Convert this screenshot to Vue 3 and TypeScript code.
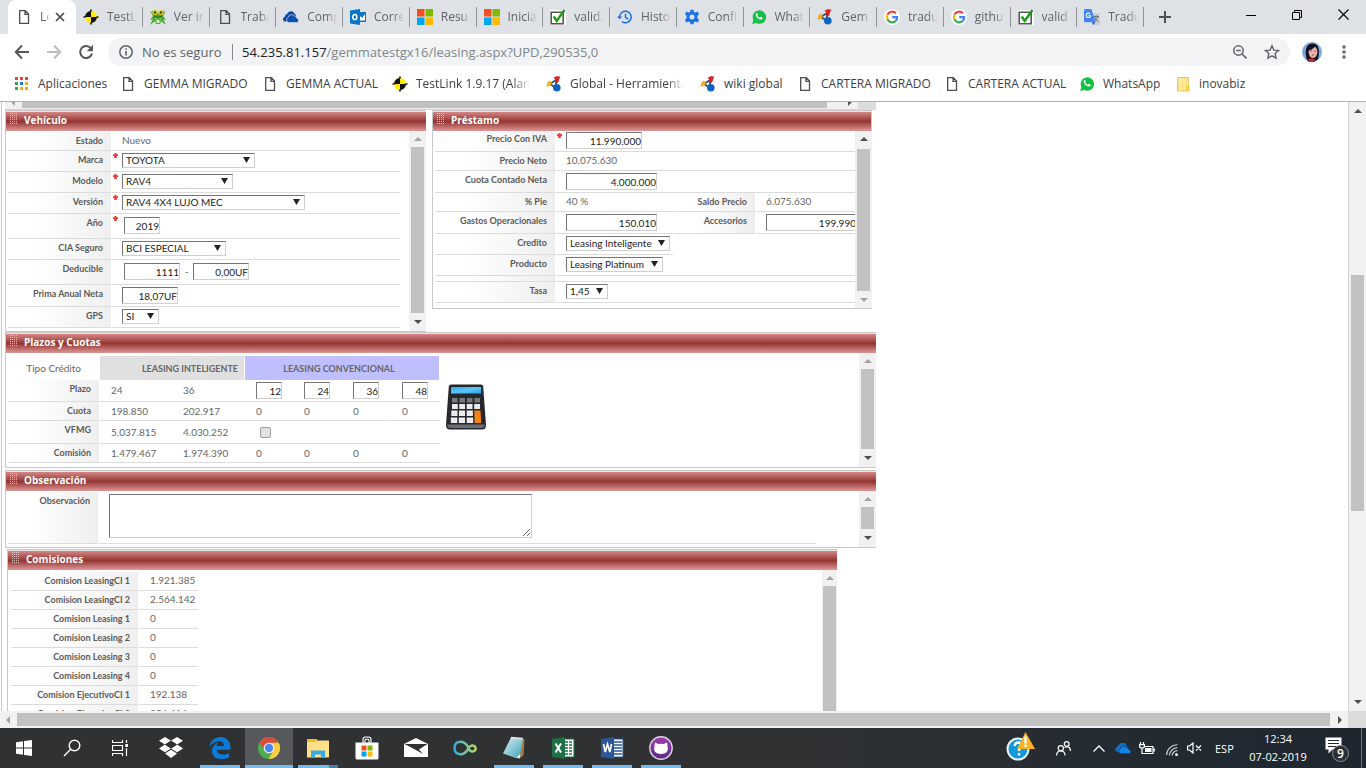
<script setup lang="ts">
import { ref } from 'vue'

interface Tab { icon: string; title: string }
interface Bookmark { icon: string; label: string; width: number }
interface Control { kind: 'text' | 'input' | 'select'; id: string; value: string; width?: number }
interface Field { label: string; required?: boolean; size: string; controls: Control[] }

const tabs: Tab[] = [
  { icon: 'testlink', title: 'TestLi' },
  { icon: 'frog', title: 'Ver in' },
  { icon: 'doc', title: 'Traba' },
  { icon: 'cloud', title: 'Comp' },
  { icon: 'outlook', title: 'Corre' },
  { icon: 'ms', title: 'Resu' },
  { icon: 'ms', title: 'Inicia' },
  { icon: 'check', title: 'valida' },
  { icon: 'history', title: 'Histo' },
  { icon: 'gear', title: 'Confi' },
  { icon: 'whatsapp', title: 'What' },
  { icon: 'global', title: 'Gem' },
  { icon: 'google', title: 'tradu' },
  { icon: 'google', title: 'githu' },
  { icon: 'check', title: 'valid' },
  { icon: 'translate', title: 'Tradu' },
]

const bookmarks: Bookmark[] = [
  { icon: 'apps', label: 'Aplicaciones', width: 66 },
  { icon: 'doc', label: 'GEMMA MIGRADO', width: 102 },
  { icon: 'doc', label: 'GEMMA ACTUAL', width: 90 },
  { icon: 'testlink', label: 'TestLink 1.9.17 (Alan T', width: 114 },
  { icon: 'global', label: 'Global - Herramientas', width: 114 },
  { icon: 'global', label: 'wiki global', width: 57 },
  { icon: 'doc', label: 'CARTERA MIGRADO', width: 107 },
  { icon: 'doc', label: 'CARTERA ACTUAL', width: 95 },
  { icon: 'whatsapp', label: 'WhatsApp', width: 56 },
  { icon: 'folder', label: 'inovabiz', width: 46 },
]

const vehiculo: Field[] = [
  { label: 'Estado', size: 'plain', controls: [{ kind: 'text', id: 'estado', value: 'Nuevo' }] },
  { label: 'Marca', required: true, size: 'pick', controls: [{ kind: 'select', id: 'marca', value: 'TOYOTA', width: 133 }] },
  { label: 'Modelo', required: true, size: 'pick', controls: [{ kind: 'select', id: 'modelo', value: 'RAV4', width: 111 }] },
  { label: 'Versión', required: true, size: 'pick', controls: [{ kind: 'select', id: 'version', value: 'RAV4 4X4 LUJO MEC', width: 183 }] },
  { label: 'Año', required: true, size: 'tall', controls: [{ kind: 'input', id: 'anio', value: '2019', width: 36 }] },
  { label: 'CIA Seguro', size: 'pick', controls: [{ kind: 'select', id: 'cia', value: 'BCI ESPECIAL', width: 104 }] },
  {
    label: 'Deducible', size: 'tall', controls: [
      { kind: 'input', id: 'deducible', value: '1111', width: 56 },
      { kind: 'text', id: 'guion', value: '-' },
      { kind: 'input', id: 'deducible-uf', value: '0,00UF', width: 56 },
    ],
  },
  { label: 'Prima Anual Neta', size: 'entry', controls: [{ kind: 'input', id: 'prima', value: '18,07UF', width: 56 }] },
  { label: 'GPS', size: 'pick', controls: [{ kind: 'select', id: 'gps', value: 'SI', width: 37 }] },
]

const plazos = ref<string[]>(['12', '24', '36', '48'])
const aplicaVfmg = ref(false)
const observacion = ref('')

const comisiones: [string, string][] = [
  ['Comision LeasingCI 1', '1.921.385'],
  ['Comision LeasingCI 2', '2.564.142'],
  ['Comision Leasing 1', '0'],
  ['Comision Leasing 2', '0'],
  ['Comision Leasing 3', '0'],
  ['Comision Leasing 4', '0'],
  ['Comision EjecutivoCI 1', '192.138'],
  ['Comision EjecutivoCI 2', '256.414'],
]

const apps = [
  { name: 'Dropbox', icon: 'dropbox', state: '' },
  { name: 'Edge', icon: 'edge', state: 'open' },
  { name: 'Chrome', icon: 'chrome', state: 'active' },
  { name: 'Explorador', icon: 'explorer', state: 'open multi' },
  { name: 'Tienda', icon: 'store', state: '' },
  { name: 'Correo', icon: 'mail', state: '' },
  { name: 'Infinito', icon: 'infinity', state: '' },
  { name: 'Bloc de notas', icon: 'notepad', state: 'open' },
  { name: 'Excel', icon: 'excel', state: 'open' },
  { name: 'Word', icon: 'word', state: 'open' },
  { name: 'GitHub', icon: 'github', state: 'open' },
]
</script>

<template>
  <div class="screen">
    <svg class="defs" aria-hidden="true">
      <linearGradient id="g-inf" x1="0" x2="1"><stop offset="0" stop-color="#36b0d8" /><stop offset="1" stop-color="#b5d86a" /></linearGradient>
      <linearGradient id="g-note" x1="0" y1="0" x2="1" y2="1"><stop offset="0" stop-color="#d8f2f6" /><stop offset="1" stop-color="#3f9fb5" /></linearGradient>
      <linearGradient id="g-git" x1="0" y1="0" x2="0" y2="1"><stop offset="0" stop-color="#a63db0" /><stop offset="1" stop-color="#562a86" /></linearGradient>
      <linearGradient id="g-lcd" x1="0" y1="0" x2="1" y2="1"><stop offset="0" stop-color="#2aa5ee" /><stop offset=".5" stop-color="#5cc6fb" /><stop offset="1" stop-color="#2a9fe8" /></linearGradient>
      <symbol id="i-doc" viewBox="0 0 16 16"><path d="M3.700 1.700h5.600l3.200 3.200v9.400H3.700zM9 2v3.300h3.400" fill="none" stroke="#4a4d51" stroke-width="1.300" /></symbol>
      <symbol id="i-testlink" viewBox="0 0 16 16"><circle cx="8" cy="8" r="6" fill="#ffec00" /><path d="M8 8V2a6 6 0 0 0-6 6zM8 8v6a6 6 0 0 0 6-6z" fill="#111" /><path d="M7.200.5h1.600v2H7.200zM7.200 13.500h1.600v2H7.200zM.5 7.200h2v1.600h-2zM13.500 7.200h2v1.600h-2z" fill="#111" /></symbol>
      <symbol id="i-frog" viewBox="0 0 16 16"><path d="M0 2l3 2-1-3 4 3h4l4-3-1 3 3-2-3 5 3 4-3-1 3 6-5-4-1 3H6l-1-3-5 4 3-6-3 1 3-4z" fill="#46a22e" /><path d="M5 8h6l1 4-4 3-4-3z" fill="#5fbb3d" /><circle cx="5" cy="3.500" r="2.600" fill="#e8cc22" /><circle cx="11" cy="3.500" r="2.600" fill="#e8cc22" /><circle cx="5" cy="3.500" r="1.200" fill="#234f16" /><circle cx="11" cy="3.500" r="1.200" fill="#234f16" /><path d="M4 7q4 3 8 0" fill="none" stroke="#1f6115" /><path d="M6.500 11h3v3h-3z" fill="#d5efc6" /></symbol>
      <symbol id="i-cloud" viewBox="0 0 16 16"><path d="M2.500 12.800a2.600 2.600 0 0 1-.6-5.100 3 3 0 0 1 2.300-3 4 4 0 0 1 7.300-.2A3.400 3.400 0 0 1 13 8z" fill="#0b48a8" /><path d="M5.600 13.600a2.700 2.700 0 0 1-.5-5.100 3.300 3.300 0 0 1 5.800-1.700 2.900 2.900 0 0 1 3 2.500 2.300 2.300 0 0 1 .4 4.300z" fill="#0b4fb3" stroke="#dee1e6" stroke-width=".7" /></symbol>
      <symbol id="i-outlook" viewBox="0 0 16 16"><path d="M8 3h8v10H8z" fill="#0a74c8" /><path d="M9 6.500l3.300 2.200L15 5v6.500H9z" fill="#fff" /><path d="M0 1.400L10 0v16L0 14.600z" fill="#0a74c8" /><ellipse cx="4.800" cy="8" rx="2" ry="2.600" fill="none" stroke="#fff" stroke-width="1.500" /></symbol>
      <symbol id="i-ms" viewBox="0 0 16 16"><path d="M0 0h7.500v7.500H0z" fill="#f25022" /><path d="M8.500 0H16v7.500H8.500z" fill="#7fba00" /><path d="M0 8.500h7.500V16H0z" fill="#00a4ef" /><path d="M8.500 8.500H16V16H8.500z" fill="#ffb900" /></symbol>
      <symbol id="i-check" viewBox="0 0 16 16"><path d="M0 1h16v15H0z" fill="#fff" /><path d="M1.200 3.200h12v11.600h-12z" fill="none" stroke="#555" stroke-width="1.600" /><path d="M3.700 7.500l3 4.500L14.500 1" fill="none" stroke="#1a9a12" stroke-width="2.400" /></symbol>
      <symbol id="i-history" viewBox="0 0 16 16"><path d="M2.600 8A5.800 5.800 0 1 1 5 12.700M8.500 4.800v3.700l2.700 1.600" fill="none" stroke="#1a73e8" stroke-width="1.500" /><path d="M0 7.500h5.200L2.600 10.300z" fill="#1a73e8" /></symbol>
      <symbol id="i-gear" viewBox="0 0 16 16"><path d="M8 4a4 4 0 1 0 0 8 4 4 0 0 0 0-8z" fill="none" stroke="#1a73e8" stroke-width="3" /><path d="M6.500.8h3l.5 3H6zM6 12.200h4l-.5 3h-3zM.9 5.200l1.500-2.600 2.900 1.200-2 3.400zM12.700 8.800l2.400 2-1.500 2.600-2.900-1.200zM15.100 5.200l-1.500-2.600-2.900 1.200 2 3.400zM3.300 8.800l-2.400 2 1.500 2.600 2.900-1.200z" fill="#1a73e8" /></symbol>
      <symbol id="i-whatsapp" viewBox="0 0 16 16"><path d="M1.200 15l1.200-3.900A6.700 6.700 0 1 1 5.100 13.900z" fill="#10c143" /><path d="M4.900 4.500c.8-1 1.500-.5 2 1.200-.8.900-.6 1 .2 1.900s1.400 1.300 1.700 1.200l1-1.100 1.900 1c.2 1.400-1.400 2.200-2.800 1.800C6.300 9.700 4.100 6.900 4.900 4.500z" fill="#fff" /></symbol>
      <symbol id="i-global" viewBox="0 0 16 16"><path d="M10 4L4 8l6 4z" fill="none" stroke="#38516f" stroke-width="1.800" /><path d="M7.500 1.800C9.500.2 12.500-.6 14.500 1c-1.500 1-1.600 3.500-2.500 6-2.500-.4-3.300-2-2.700-3.800z" fill="#e02020" /><path d="M.5 11C.8 7.500 1.800 5 4 4.600c2.300 1.600 2 4-.3 5.200z" fill="#f5b11c" /><circle cx="10.800" cy="11.800" r="3.800" fill="#0a63c0" /></symbol>
      <symbol id="i-google" viewBox="0 0 16 16"><circle cx="8" cy="8" r="8" fill="#fff" /><path d="M12 4.300A5.300 5.300 0 0 0 3.500 5.500" fill="none" stroke="#ea4335" stroke-width="2.200" /><path d="M3.500 5.500a5.200 5.200 0 0 0 0 5" fill="none" stroke="#fbbc05" stroke-width="2.200" /><path d="M3.500 10.500a5.200 5.200 0 0 0 8.200 1.500" fill="none" stroke="#34a853" stroke-width="2.200" /><path d="M11.700 12a5 5 0 0 0 1.400-3.800H8.200" fill="none" stroke="#4285f4" stroke-width="2.200" /></symbol>
      <symbol id="i-translate" viewBox="0 0 16 16"><path d="M7 4h9v12H9z" fill="#ccd0d5" /><path d="M9.500 7.500h5.500M12.200 6v1.500M10.300 8l4 5M14.200 8l-4 5" stroke="#68727d" fill="none" /><path d="M1.200 0h6.300l4 13.200H1.200A1.200 1.200 0 0 1 0 12V1.200A1.200 1.200 0 0 1 1.200 0z" fill="#4285f4" /><path d="M8 13.200h3.500L9 16z" fill="#2554c7" /><path d="M6 4.800a2.200 2.200 0 1 0 .6 2H4.500" fill="none" stroke="#fff" stroke-width="1.100" /></symbol>
      <symbol id="i-apps" viewBox="0 0 16 16"><path d="M1 1h3v3H1zM6 1h3v3H6zM11 1h3v3h-3z" fill="#ea4335" /><path d="M1 6h3v3H1zM1 11h3v3H1z" fill="#34a853" /><path d="M6 6h3v3H6z" fill="#1a73e8" /><path d="M11 6h3v3h-3zM11 11h3v3h-3zM6 11h3v3H6z" fill="#f9ab00" /></symbol>
      <symbol id="i-folder" viewBox="0 0 16 16"><path d="M2.500 1.500h10.800v10.500l1 3H2.500z" fill="#ffe694" stroke="#e8c55c" /><path d="M11.700 14.500v-4h1.800v4" fill="#ffe694" stroke="#e8c02c" /></symbol>
      <symbol id="i-up" viewBox="0 0 8 4"><path d="M4 0l4 4H0z" fill="currentColor" /></symbol>
      <symbol id="i-down" viewBox="0 0 8 4"><path d="M4 4l4-4H0z" fill="currentColor" /></symbol>
      <symbol id="i-left" viewBox="0 0 4 8"><path d="M0 4l4-4v8z" fill="currentColor" /></symbol>
      <symbol id="i-right" viewBox="0 0 4 8"><path d="M4 4L0 0v8z" fill="currentColor" /></symbol>
      <symbol id="i-star" viewBox="0 0 5 6"><path d="M1.500 0h2v1.200H5v1.900H3.800V5H1.200V3.100H0V1.200h1.500z" fill="#f23a34" /></symbol>

      <symbol id="a-dropbox" viewBox="0 0 24 24"><path d="M6 1l6 3.800-6 3.800L0 4.800zM18 1l6 3.800-6 3.800-6-3.800zM6 8.600l6 3.800-6 3.800-6-3.800zM18 8.600l6 3.800-6 3.800-6-3.800zM12 13.800l6 3.800-6 4.400-6-4.400z" fill="#fff" /><path d="M12 4.800l6 3.800-6 3.800-6-3.800z" fill="#2f3133" /></symbol>
      <symbol id="a-edge" viewBox="0 0 24 24"><path d="M1.500 10.800C2.500 4.500 7 1 12.500 1c6.500 0 10 5 10 10.500v2.200H8.800c.3 5.400 7.800 5.900 12.200 3.200v4.600C13.500 25 4 23 4 15c0-4.500 2.800-7 6-8.500-1 1.200-1.300 2.300-1.400 3.500h7.500c.1-6.500-9.700-6.400-14.600.8z" fill="#0c7ad8" /></symbol>
      <symbol id="a-chrome" viewBox="0 0 24 24"><circle cx="12" cy="12" r="11" fill="#4caf50" /><path d="M2.400 6.600A11 11 0 0 1 21.600 6.700L12 7 7.300 14z" fill="#dd4b3e" /><path d="M21.700 6.700A11 11 0 0 1 11.500 23l5-8.500L13 6.700z" fill="#ffcd41" /><circle cx="12" cy="12" r="5.300" fill="#f4f4f4" /><circle cx="12" cy="12" r="4.200" fill="#4a86f0" /></symbol>
      <symbol id="a-explorer" viewBox="0 0 24 24"><path d="M1 3h10v3H1z" fill="#e8b222" /><path d="M1 4.500h22v17H1z" fill="#ffe08a" /><path d="M1 3h9v3H1z" fill="#f4bd24" /><path d="M5 22v-7.500h14V22h-4v-3.500H9V22z" fill="#35aae6" /></symbol>
      <symbol id="a-store" viewBox="0 0 24 24"><path d="M8 7V3.500Q8 1 10.500 1h3Q16 1 16 3.500V7M10 7V4q0-1 2-1t2 1v3" fill="none" stroke="#fff" stroke-width="1.100" /><path d="M.5 6.500h23V22q0 1.500-1.500 1.500H2Q.5 23.500.5 22z" fill="#fff" /><path d="M6.500 9.500h5v5h-5z" fill="#f25022" /><path d="M12.500 9.500h5v5h-5z" fill="#7fba00" /><path d="M6.500 15.500h5v5h-5z" fill="#00a4ef" /><path d="M12.500 15.500h5v5h-5z" fill="#ffb900" /></symbol>
      <symbol id="a-mail" viewBox="0 0 24 24"><path d="M0 8l12-6 12 6v13H0z" fill="#fff" /><path d="M.5 8h23l-8.500 5.500L19 18l-8-4.500z" fill="#2f3133" /></symbol>
      <symbol id="a-infinity" viewBox="0 0 24 24"><path d="M14.500 10C10 3.500 1.500 5 1.500 12s8.500 8.500 13 2l1.300-2.300c2.500-4 6.900-2 6.900.8s-4.400 4.500-6.600 1L14.500 10" fill="none" stroke="url(#g-inf)" stroke-width="2.400" /></symbol>
      <symbol id="a-notepad" viewBox="0 0 24 24"><path d="M20 2.500l2.500 1-1 16-4 3z" fill="#a97a3b" /><path d="M9 1.500l12 1-3.500 20L1 17.500z" fill="url(#g-note)" /><path d="M9 .8l12 1-.3 1.700-12-1z" fill="#dfe6e8" /><path d="M1 17.500L17.500 22.500l1-4.500L14 22z" fill="#eef7f8" /></symbol>
      <symbol id="a-excel" viewBox="0 0 24 24"><path d="M11 3h12v18H11z" fill="#fff" stroke="#1e7145" /><path d="M13 6h4M18 6h3M13 9h4M18 9h3M13 12h4M18 12h3M13 15h4M18 15h3M13 18h4M18 18h3" stroke="#1e7145" stroke-width="1.600" /><path d="M1 3l13-2v22L1 21z" fill="#1e7145" /><path d="M4.500 7.500l5.500 9M10 7.500l-5.500 9" stroke="#fff" stroke-width="2" /></symbol>
      <symbol id="a-word" viewBox="0 0 24 24"><path d="M11 3h12v18H11z" fill="#fff" stroke="#2b579a" /><path d="M13 6h9M13 9h9M13 12h9M13 15h9M13 18h9" stroke="#2b579a" stroke-width="1.500" /><path d="M1 3l13-2v22L1 21z" fill="#2b579a" /><path d="M3.500 8l1.700 8 2.300-8 2.300 8 1.700-8" fill="none" stroke="#fff" stroke-width="1.700" /></symbol>
      <symbol id="a-github" viewBox="0 0 24 24"><circle cx="12" cy="12" r="11.200" fill="url(#g-git)" stroke="#ddd0e2" stroke-width="1.400" /><path d="M6 6.500l3.300 1.600q2.700-.5 5.400 0L18 6.500q.8 2 .4 3.600c1.800 5-1.400 8-6.400 8s-8.200-3-6.400-8Q5.200 8.500 6 6.500z" fill="#fff" /></symbol>
    </svg>

    <header class="browser">
      <div class="tabstrip">
        <div class="tab current">
          <svg class="fav"><use href="#i-doc" /></svg>
          <span class="tab-title">Le</span>
          <button class="icon-btn" aria-label="Cerrar pestaña"><svg width="10" height="10" viewBox="0 0 10 10"><path d="M1 1l8 8M9 1L1 9" stroke="#45484c" stroke-width="1.700" /></svg></button>
        </div>
        <div class="tabs">
          <div v-for="(t, i) in tabs" :key="i" class="tab">
            <svg class="fav"><use :href="'#i-' + t.icon" /></svg>
            <span class="tab-title">{{ t.title }}</span>
          </div>
        </div>
        <div class="window-actions">
          <button class="icon-btn" aria-label="Nueva pestaña"><svg width="14" height="14" viewBox="0 0 14 14"><path d="M7 1v12M1 7h12" stroke="#4d5054" stroke-width="2" /></svg></button>
          <button class="icon-btn win first" aria-label="Minimizar"><svg width="10" height="10" viewBox="0 0 10 10"><path d="M0 5.500h10" stroke="#000" /></svg></button>
          <button class="icon-btn win" aria-label="Restaurar"><svg width="10" height="10" viewBox="0 0 10 10"><path d="M.5 2.500h7v7h-7zM2.500 2V.5h7v7H8" fill="none" stroke="#000" /></svg></button>
          <button class="icon-btn win" aria-label="Cerrar"><svg width="11" height="11" viewBox="0 0 11 11"><path d="M.5.500l10 10M10.500.500l-10 10" stroke="#000" stroke-width="1.100" /></svg></button>
        </div>
      </div>

      <div class="toolbar">
        <button class="icon-btn nav" aria-label="Atrás"><svg width="16" height="16" viewBox="0 0 16 16"><path d="M15 8H2M8 1.500L1.800 8 8 14.500" fill="none" stroke="#55585c" stroke-width="2" /></svg></button>
        <button class="icon-btn nav" aria-label="Adelante"><svg width="16" height="16" viewBox="0 0 16 16"><path d="M1 8h13M8 1.500L14.200 8 8 14.500" fill="none" stroke="#babcbe" stroke-width="2" /></svg></button>
        <button class="icon-btn nav" aria-label="Recargar"><svg width="16" height="16" viewBox="0 0 16 16"><path d="M13.200 4.700A6 6 0 1 0 14 9.500" fill="none" stroke="#55585c" stroke-width="2" /><path d="M15 .8v6.400H8.700z" fill="#55585c" /></svg></button>
        <div class="omnibox">
          <svg width="14" height="14" viewBox="0 0 14 14"><circle cx="7" cy="7" r="6.200" fill="none" stroke="#5f6368" stroke-width="1.500" /><path d="M7 6v4.500M7 3.300v1.500" stroke="#5f6368" stroke-width="1.600" /></svg>
          <span class="insecure">No es seguro</span>
          <span class="url"><b>54.235.81.157</b>/gemmatestgx16/leasing.aspx?UPD,290535,0</span>
          <button class="icon-btn" aria-label="Zoom"><svg width="14" height="14" viewBox="0 0 14 14"><circle cx="5.500" cy="5.500" r="4.700" fill="none" stroke="#5f6368" stroke-width="1.500" /><path d="M3.200 5.500h4.600M9 9l4.500 4.500" stroke="#5f6368" stroke-width="1.600" /></svg></button>
          <button class="icon-btn fav-star" aria-label="Favorito"><svg width="16" height="16" viewBox="0 0 16 16"><path d="M8 1.800l1.900 4.300 4.700.4-3.500 3.100 1 4.600L8 11.800l-4.100 2.400 1-4.600L1.400 6.500l4.700-.4z" fill="none" stroke="#5f6368" stroke-width="1.400" /></svg></button>
        </div>
        <svg class="avatar" viewBox="0 0 20 20"><circle cx="10" cy="10" r="10" fill="#7aa9dc" /><path d="M5 18C2 9 4 1.500 10.500 1.500S18 8 16 17l-4 3H7z" fill="#14101f" /><ellipse cx="11" cy="10" rx="4.400" ry="6" fill="#e8b3ab" /><path d="M5.500 9q5-1 8-5L7 3z" fill="#14101f" /><path d="M6 17l4-1 4 2-3 2H7z" fill="#b3302a" /><path d="M8.500 9h1.500M12 9h1.500M10 13h2" stroke="#7c3b3b" stroke-width=".8" /></svg>
        <button class="icon-btn menu" aria-label="Menú"><svg width="4" height="14" viewBox="0 0 4 14"><path d="M.5.500h3v3h-3zM.5 5.500h3v3h-3zM.5 10.500h3v3h-3z" fill="#5f6368" /></svg></button>
      </div>

      <nav class="bookmarks">
        <a v-for="(b, i) in bookmarks" :key="i" href="#" class="bookmark">
          <svg class="fav"><use :href="'#i-' + b.icon" /></svg>
          <span :class="{ faded: b.width === 114 }" :style="{ width: b.width + 'px' }">{{ b.label }}</span>
        </a>
      </nav>
    </header>

    <main class="viewport">
      <div class="page">
        <div class="form">
          <div class="upper-scroll">
            <svg class="ha dim" width="4" height="8"><use href="#i-left" /></svg>
            <i class="upper-thumb"></i>
            <svg class="ha" width="4" height="8"><use href="#i-right" /></svg>
            <i class="corner"></i>
          </div>

          <div class="pair">
            <section class="panel vehiculo">
              <h2>Vehículo</h2>
              <div class="body">
                <div class="fields">
                  <div v-for="f in vehiculo" :key="f.label" class="row" :class="f.size">
                    <label :for="f.controls[0].id">{{ f.label }}</label>
                    <div class="value">
                      <svg v-if="f.required" class="req"><use href="#i-star" /></svg>
                      <template v-for="c in f.controls" :key="c.id">
                        <span v-if="c.kind === 'text'" :id="c.id" class="plain-text">{{ c.value }}</span>
                        <input v-else-if="c.kind === 'input'" :id="c.id" type="text" :value="c.value" :style="{ width: c.width + 'px' }">
                        <span v-else class="pick-box" :style="{ width: c.width + 'px' }"><select :id="c.id"><option>{{ c.value }}</option></select></span>
                      </template>
                    </div>
                  </div>
                </div>
                <div class="scroll">
                  <svg class="dim"><use href="#i-up" /></svg><i class="thumb"></i><svg><use href="#i-down" /></svg>
                </div>
              </div>
            </section>

            <section class="panel prestamo">
              <h2>Préstamo</h2>
              <div class="body">
                <div class="fields">
                  <div class="row tight">
                    <label for="iva">Precio Con IVA</label>
                    <div class="value"><svg class="req"><use href="#i-star" /></svg><input id="iva" class="w76" type="text" value="11.990.000"></div>
                  </div>
                  <div class="row plain"><label>Precio Neto</label><div class="value">10.075.630</div></div>
                  <div class="row entry"><label for="contado">Cuota Contado Neta</label><div class="value"><input id="contado" class="w91" type="text" value="4.000.000"></div></div>
                  <div class="row plain four"><label>% Pie</label><div class="value">40 %</div><label>Saldo Precio</label><div class="value">6.075.630</div></div>
                  <div class="row entry four">
                    <label for="gastos">Gastos Operacionales</label><div class="value"><input id="gastos" class="w91" type="text" value="150.010"></div>
                    <label for="accesorios">Accesorios</label><div class="value"><input id="accesorios" class="w91" type="text" value="199.990"></div>
                  </div>
                  <div class="row pick four"><label for="credito">Credito</label><div class="value"><span class="pick-box w104"><select id="credito"><option>Leasing Inteligente</option></select></span></div></div>
                  <div class="row pick"><label for="producto">Producto</label><div class="value"><span class="pick-box w97"><select id="producto"><option>Leasing Platinum</option></select></span></div></div>
                  <div class="row thin"><span class="blank"></span><div class="value"></div></div>
                  <div class="row pick"><label for="tasa">Tasa</label><div class="value"><span class="pick-box w42"><select id="tasa"><option>1,45</option></select></span></div></div>
                </div>
                <div class="scroll lower">
                  <svg><use href="#i-up" /></svg><i class="thumb"></i><svg class="dim"><use href="#i-down" /></svg>
                </div>
              </div>
            </section>
          </div>

          <section class="panel plazos">
            <h2>Plazos y Cuotas</h2>
            <div class="body">
              <div class="fields">
                <table class="terms">
                  <colgroup><col class="c91"><col class="c72"><col class="c73"><col class="c48"><col class="c49"><col class="c49"><col class="c49"></colgroup>
                  <thead>
                    <tr><th class="kind">Tipo Crédito</th><th colspan="2" class="smart">LEASING INTELIGENTE</th><th colspan="4" class="conv">LEASING CONVENCIONAL</th></tr>
                  </thead>
                  <tbody>
                    <tr class="t22"><th>Plazo</th><td>24</td><td>36</td><td v-for="(p, i) in plazos" :key="i"><input v-model="plazos[i]" class="w26" type="text" :aria-label="'Plazo ' + p"></td></tr>
                    <tr class="t19"><th>Cuota</th><td>198.850</td><td>202.917</td><td>0</td><td>0</td><td>0</td><td>0</td></tr>
                    <tr class="t23"><th>VFMG</th><td>5.037.815</td><td>4.030.252</td><td colspan="4"><input v-model="aplicaVfmg" type="checkbox" aria-label="Aplica VFMG"></td></tr>
                    <tr class="t19"><th>Comisión</th><td>1.479.467</td><td>1.974.390</td><td>0</td><td>0</td><td>0</td><td>0</td></tr>
                  </tbody>
                </table>
                <button class="calc" aria-label="Calcular">
                  <svg width="40" height="46" viewBox="0 0 40 46">
                    <path d="M5 .5h30q2 0 2.200 2L40 41q0 4.500-4 4.500H4q-4 0-4-4.500L2.800 2.500Q3 .5 5 .5z" fill="#25282c" />
                    <path d="M1 40.500l.5 1.500q1 2 3 2h31q2 0 3-2l.5-1.500z" fill="#6b6e72" />
                    <path d="M5 3h30v6.500H5z" fill="url(#g-lcd)" />
                    <path d="M6 14h5.500v4.500H6zM13.500 14H19v4.500h-5.500zM21 14h5.500v4.500H21zM28.500 14H34v4.500h-5.500z" fill="#77797c" />
                    <path d="M6 20h5.800v5H6zM13.300 20H19v5h-5.700zM20.700 20h5.800v5h-5.800zM28.200 20H34v5h-5.800zM5.300 26.500H11.500v5.500H5.300zM13 26.500H19v5.500h-6zM20.700 26.500h6.200v5.500h-6.200zM4.800 33.500h6.500V39H4.800zM12.800 33.500H19V39h-6.200zM20.700 33.500h6.500V39h-6.500z" fill="#ececec" />
                    <path d="M28.300 26.500h6.200l.7 12.500h-6.500z" fill="#f58410" />
                  </svg>
                </button>
              </div>
              <div class="scroll">
                <svg class="dim"><use href="#i-up" /></svg><i class="thumb"></i><svg><use href="#i-down" /></svg>
              </div>
            </div>
          </section>

          <section class="panel obs">
            <h2>Observación</h2>
            <div class="body">
              <div class="fields">
                <div class="row"><label for="obs">Observación</label><div class="value"><textarea id="obs" v-model="observacion"></textarea></div></div>
              </div>
              <div class="scroll">
                <svg class="dim"><use href="#i-up" /></svg><i class="thumb"></i><svg><use href="#i-down" /></svg>
              </div>
            </div>
          </section>

          <section class="panel comisiones">
            <h2>Comisiones</h2>
            <div class="body">
              <div class="fields">
                <div v-for="[name, amount] in comisiones" :key="name" class="row plain"><label>{{ name }}</label><div class="value">{{ amount }}</div></div>
              </div>
              <div class="scroll">
                <svg class="dim"><use href="#i-up" /></svg><i class="thumb"></i>
              </div>
            </div>
          </section>
        </div>
      </div>
      <div class="scroll main-scroll">
        <svg><use href="#i-up" /></svg>
        <div class="track"><i class="thumb"></i></div>
        <svg><use href="#i-down" /></svg>
      </div>
    </main>

    <div class="hscroll">
      <svg class="ha dim" width="4" height="8"><use href="#i-left" /></svg>
      <i class="hthumb"></i>
      <svg class="ha" width="4" height="8"><use href="#i-right" /></svg>
      <i class="corner"></i>
    </div>

    <footer class="taskbar">
      <button class="task sys" aria-label="Inicio"><svg width="16" height="16" viewBox="0 0 16 16"><path d="M0 2.200l7-1v6.300H0zM8 1l8-1v7.500H8zM0 8.500h7v6.300l-7-1zM8 8.500h8V16l-8-1z" fill="#fff" /></svg></button>
      <button class="task sys" aria-label="Buscar"><svg width="18" height="18" viewBox="0 0 18 18"><circle cx="11.500" cy="6.500" r="5.300" fill="none" stroke="#fff" stroke-width="1.400" /><path d="M7.700 10.300L1 17" stroke="#fff" stroke-width="1.400" /></svg></button>
      <button class="task sys" aria-label="Vista de tareas"><svg width="16" height="16" viewBox="0 0 16 16"><path d="M.5 0v2.500h10V0M.5 5.500h10v5H.5zM.5 16v-2.500h10V16M14.500 0v3M14.500 8v8" fill="none" stroke="#fff" stroke-width="1.200" /><path d="M13.300 4h2.700v3h-2.700z" fill="#fff" /></svg></button>
      <button v-for="a in apps" :key="a.name" class="task app" :class="a.state" :aria-label="a.name"><svg width="24" height="24"><use :href="'#a-' + a.icon" /></svg></button>
      <div class="tray">
        <svg class="t-help" width="30" height="30" viewBox="0 0 30 30"><circle cx="12" cy="18" r="10.500" fill="#1597dc" stroke="#e6f2f8" stroke-width="2" /><path d="M8.500 15q.5-3.500 4-3.500 4 .5 3 4-2.500 2-2.500 4.500M13 22v2.500" fill="none" stroke="#fff" stroke-width="2.400" /><path d="M19.500 1L29 18H11z" fill="#fbb320" /><path d="M19.500 5.500v7M19.500 13.800v2.200" stroke="#fff" stroke-width="2.400" /></svg>
        <svg class="t-people" width="15" height="15" viewBox="0 0 15 15"><g fill="none" stroke="#fff" stroke-width="1.200"><circle cx="4.800" cy="7.300" r="2.600" /><path d="M.6 14.500q0-4.500 4.200-4.500t4.200 4.500" /><circle cx="10.700" cy="3" r="2.400" /><path d="M8.500 6.500q5.500-2.500 6 3.500" /></g></svg>
        <svg class="t-chev" width="12" height="7" viewBox="0 0 12 7"><path d="M.5 6.500L6 1l5.500 5.500" fill="none" stroke="#fff" stroke-width="1.300" /></svg>
        <svg class="t-cloud" width="16" height="11" viewBox="0 0 16 11"><path d="M2.500 9A2.600 2.600 0 0 1 2 4a3 3 0 0 1 2.300-2.300 4 4 0 0 1 7.300.8L13 5z" fill="#0c6fd2" /><path d="M5.600 10.800A2.500 2.500 0 0 1 5.100 6a3.300 3.300 0 0 1 5.800-1.700 2.900 2.900 0 0 1 3 2.200 2.200 2.200 0 0 1 .4 4.300z" fill="#1383e6" stroke="#24292f" stroke-width=".6" /></svg>
        <svg class="t-bat" width="16" height="13" viewBox="0 0 16 13"><path d="M5 4.500h9v7H4.500M15.300 6.500v3M1.500 0v2M4.500 0v2M.6 2.600h4.800v2q0 1.400-2.400 1.400T.6 4.600zM3 6v5.500h2" fill="none" stroke="#fff" stroke-width="1.200" /><path d="M6 6h6.500v4H6z" fill="#fff" /></svg>
        <svg class="t-wifi" width="12" height="12" viewBox="0 0 12 12"><g fill="none" stroke="#d5d8db" stroke-width="1.100"><path d="M.6 11A10.500 10.500 0 0 1 11.500.8M3.400 11.500a8 8 0 0 1 8.100-7.700M6.200 11.500a5 5 0 0 1 5.300-4.800" /></g><circle cx="10.500" cy="10.700" r="1.400" fill="#fff" /></svg>
        <svg class="t-vol" width="15" height="12" viewBox="0 0 15 12"><path d="M.6 4h2L6 1v10L2.600 8h-2zM9 3.500l5 5M14 3.500l-5 5" fill="none" stroke="#fff" stroke-width="1.200" /></svg>
        <span class="lang">ESP</span>
        <span class="clock">12:34<br>07-02-2019</span>
        <span class="notif">
          <svg width="17" height="17" viewBox="0 0 17 17"><path d="M.5.500h16v12h-9L3.500 16.500v-4h-3z" fill="#fff" /><path d="M3 3.500h11M3 6.500h11M3 9.500h8" stroke="#24292f" /></svg>
          <b>9</b>
        </span>
        <i class="desktop-edge"></i>
      </div>
    </footer>
  </div>
</template>

<style>
html, body { margin: 0; overflow: hidden; }
</style>

<style scoped>
* { box-sizing: border-box; }
.screen { height: 100vh; display: flex; flex-direction: column; overflow: hidden; background: #fff; font-family: "Open Sans", sans-serif; color: #3c4043; }
.defs { position: absolute; width: 0; height: 0; }
button { border: 0; background: none; padding: 0; margin: 0; font: inherit; color: inherit; }
.icon-btn { display: flex; align-items: center; justify-content: center; flex: none; }
svg { flex: none; }

/* Browser frame */
.browser { flex: none; border-bottom: 1px solid #aeb1b4; }
.tabstrip { display: flex; height: 34px; background: #dee1e6; padding-left: 8px; font-size: 12px; }
.tab { display: flex; align-items: center; gap: 8px; min-width: 0; }
.fav { width: 16px; height: 16px; }
.tab-title { flex: 1; min-width: 0; overflow: hidden; white-space: nowrap; line-height: 20px; color: #5f6368; mask-image: linear-gradient(to right, #000 65%, transparent 100%); }
.tab.current { width: 68px; background: #fff; border-radius: 8px 8px 0 0; padding: 0 11px 0 8px; }
.tab.current .icon-btn { margin-left: -2px; }
.tabs { flex: 1; display: flex; align-items: center; min-width: 0; }
.tabs .tab { flex: 1; height: 20px; padding: 0 5px 0 7px; border-right: 1px solid #8f9297; }
.window-actions { flex: none; display: flex; align-items: center; width: 222px; padding-left: 14px; }
.win { width: 46px; height: 29px; align-self: flex-start; }
.win.first { margin-left: 56px; }
.toolbar { display: flex; align-items: center; height: 37px; padding: 0 0 1px 14px; }
.nav { width: 16px; margin-right: 16px; }
.omnibox { flex: 1; min-width: 0; display: flex; align-items: center; height: 28px; margin-left: -2px; padding: 0 10px 0 11px; border-radius: 14px; background: #f1f3f4; font-size: 13px; line-height: 20px; }
.insecure { margin-left: 9px; padding-right: 8px; border-right: 1px solid #86898d; color: #5f6368; white-space: nowrap; width: 91px; line-height: 16px; }
.url { flex: 1; padding-left: 9px; color: #80868b; white-space: nowrap; }
.url b { font-weight: 400; color: #202124; }
.fav-star { margin-left: 17px; }
.avatar { width: 20px; height: 20px; margin-left: 12px; }
.menu { width: 44px; }
.bookmarks { display: flex; gap: 16px; height: 30px; padding: 0 14px 4px; align-items: center; font-size: 12px; }
.bookmark { display: flex; align-items: center; gap: 8px; color: #3c4043; text-decoration: none; white-space: nowrap; line-height: 18px; }
.faded { overflow: hidden; mask-image: linear-gradient(to right, #000 85%, transparent 100%); }

/* Web page */
.viewport { flex: 1; min-height: 0; display: flex; overflow: hidden; font-family: Lato, sans-serif; font-size: 10px; color: #666; }
.page { flex: 1; min-width: 0; margin-left: 1px; padding-left: 3px; border-left: 1px solid #c9c9c9; overflow: hidden; }
.form { max-width: 871px; }
.upper-scroll { display: flex; align-items: flex-start; height: 8px; background: linear-gradient(#f1f1f1 7px, #d5d5d5 7px); overflow: hidden; }
.upper-scroll .ha { margin: -4px 6px 0; }
.upper-scroll .ha:first-child { margin-right: 7px; }
.upper-thumb { flex: 1; height: 6px; background: #c1c1c1; margin-right: 15px; }
.corner { width: 18px; align-self: stretch; background: #dcdcdc; flex: none; }
.ha { color: #505050; }
.dim { color: #a3a3a3 !important; }
.pair { display: flex; align-items: flex-start; }
.panel { border: 1px solid #c8c8c8; background: #fff; }
h2 { position: relative; height: 20px; margin: 0; padding-left: 18px; border-top: 1px solid #e6e6e6; color: #fff; font: bold 10px/17px "Open Sans", sans-serif; background: linear-gradient(#d48785, #953532 50%, #de9896); }
h2::before { content: ""; position: absolute; left: 4px; top: 1px; width: 7px; height: 11px; background: repeating-linear-gradient(to right, #e3bcbb 0 1px, transparent 1px 2px); mask-image: repeating-linear-gradient(#000 0 1px, transparent 1px 2px); }
.body { display: flex; }
.fields { flex: 1; min-width: 0; overflow: hidden; }
.scroll { flex: none; display: flex; flex-direction: column; align-items: center; width: 17px; background: #f1f1f1; color: #505050; }
.scroll svg { width: 8px; height: 4px; margin: 6px 0; }
.scroll svg:last-child { margin: 7px 0; }
.thumb { display: block; flex: 1; width: 13px; background: #c1c1c1; }
.row { display: grid; grid-template-columns: 103px 1fr; column-gap: 1px; }
.row > * { border-bottom: 1px solid #dcdcdc; }
.row label, .blank, .terms tbody th { padding-right: 8px; text-align: right; font-size: 9px; font-weight: 700; line-height: 18px; color: #5a5a5a; white-space: nowrap; background: linear-gradient(to right, #fff 25%, #efefef); }
.value { position: relative; display: flex; align-items: flex-start; padding-left: 10px; line-height: 18px; white-space: nowrap; }
.req { position: absolute; left: 1px; top: 2px; width: 5px; height: 6px; }
.plain .value { padding-bottom: 1px; line-height: 17px; }
.pick .value { padding-top: 2px; padding-bottom: 3px; }
.entry .value { padding-top: 2px; padding-bottom: 2px; }
.tight .value { padding-top: 1px; padding-bottom: 2px; }
.row.tight label { line-height: 16px; }
.tall .value { padding: 3px 0 4px 12px; line-height: 17px; }
.thin > * { height: 6px; }
.tall .plain-text { width: 13px; text-align: center; }
input, select, textarea { margin: 0; border: 1px solid; border-color: #767676 #cfcfcf #cfcfcf #767676; border-radius: 0; background: #fff; color: #222; font: 10px/13px Lato, sans-serif; }
input[type="text"] { height: 17px; padding: 0; text-align: right; }
.pick-box { position: relative; display: block; }
.pick-box::after { content: ""; position: absolute; right: 5px; top: 4px; width: 7px; height: 6px; background: #222; clip-path: polygon(0 0, 100% 0, 50% 100%); }
select { appearance: none; display: block; width: 100%; height: 15px; padding: 0 0 0 3px; }
.w26 { width: 26px; }
.w42 { width: 42px; }
.w76 { width: 76px; }
.w91 { width: 91px; flex: none; }
.w97 { width: 97px; }
.w104 { width: 104px; }

.vehiculo { flex: 0 0 421px; margin-right: 6px; border-right: 0; }
.vehiculo .fields { padding: 1px 9px 3px 2px; }
.prestamo { flex: 0 0 440px; }
.prestamo .body { margin-right: -1px; }
.prestamo .fields { padding: 0 0 5px 2px; }
.prestamo .row { grid-template-columns: 120px minmax(0, 1fr); }
.prestamo .row.four { grid-template-columns: 120px 117px 81px minmax(0, 1fr); }
.lower .thumb { margin: 2px 0 1px; }
.lower svg:last-child { margin: 6px 0; }

.plazos, .obs { border-right: 0; }
.plazos .fields { display: flex; align-items: flex-start; padding: 3px 0 4px 3px; }
.terms { border-collapse: separate; border-spacing: 0; table-layout: fixed; width: 431px; }
.terms th, .terms td { padding: 0 0 0 11px; border-right: 1px solid #fff; text-align: left; vertical-align: top; line-height: 18px; font-weight: 400; }
.terms tbody th { padding: 0 8px 0 0; text-align: right; font-weight: 700; border-bottom: 1px solid #dcdcdc; }
.terms tbody td { border-bottom: 1px solid #dcdcdc; vertical-align: middle; line-height: 17px; }
.terms thead th { height: 24px; vertical-align: middle; font-weight: 700; font-size: 9px; padding: 2px 0 0; }
.terms thead .kind { padding: 0 18px 0 0; text-align: right; font-size: 10px; font-weight: 400; }
.terms thead .smart { background: #e0e0e0; text-align: right; padding-right: 6px; }
.terms thead .conv { background: #bfbfff; text-align: center; padding-right: 6px; }
.c91 { width: 91px; } .c72 { width: 72px; } .c73 { width: 73px; } .c48 { width: 48px; } .c49 { width: 49px; }
.terms .t19 > * { height: 19px; } .terms .t22 > * { height: 22px; } .terms .t23 > * { height: 23px; }
.terms input { display: block; }
input[type="checkbox"] { appearance: none; width: 11px; height: 11px; margin-left: 4px; border: 1px solid #a0a0a0; border-radius: 2px; background: #e2e2e2; }
.calc { margin: 28px 0 0 6px; }
.calc svg { display: block; }

.obs { margin-top: 2px; }
.obs .fields { padding: 1px 43px 3px 2px; }
.obs .row { grid-template-columns: 90px 1fr; }
.obs .value { padding: 2px 0 5px 10px; }
textarea { width: 423px; height: 44px; }
.comisiones { margin: 1px 39px 0 2px; border-right: 0; }
.comisiones .fields { padding: 2px 0 0 3px; }
.comisiones .row { grid-template-columns: 127px 59px; }
.comisiones .row label { line-height: 17px; }
.comisiones .value { padding-left: 11px; }
.comisiones .scroll { width: 15px; }

.main-scroll { width: 18px; border-left: 1px solid #d4d4d4; }
.main-scroll svg:first-child { margin-top: 7px; }
.track { flex: 1; display: flex; padding: 156px 0 182px; }
.hscroll { flex: none; display: flex; align-items: center; height: 17px; background: #f1f1f1; padding-left: 6px; }
.hthumb { flex: 1; height: 13px; margin: 0 8px 0 7px; background: #c1c1c1; }
.hscroll .corner { margin-left: 6px; }

/* Windows taskbar */
.taskbar { flex: none; display: flex; height: 40px; background: linear-gradient(to right, #2f3133 60%, #222a32 85%, #1e2730); color: #fff; }
.task { position: relative; display: flex; align-items: center; justify-content: center; width: 48px; }
.app { margin-right: 1px; }
.task.sys + .app { margin-left: 3px; }
.app.active { background: #56595c; }
.app.open::after, .app.active::after { content: ""; position: absolute; left: 4px; right: 4px; bottom: 0; height: 3px; background: #76b9ed; }
.app.active::after { left: 0; right: 0; }
.app.multi::after { background: linear-gradient(to right, #76b9ed 31px, #4a7ba3 31px); }
.tray { margin-left: auto; display: flex; align-items: center; font-size: 12px; }
.t-help { margin: 0 20px 4px 0; }
.t-people { margin-right: 22px; }
.t-chev { margin-right: 10px; }
.t-cloud { margin-right: 8px; }
.t-bat { margin-right: 11px; }
.t-wifi { margin: 4px 9px 0 0; }
.t-vol { margin-right: 13px; }
.lang { width: 24px; font-size: 11px; }
.clock { width: 78px; text-align: center; line-height: 18px; font-size: 11px; }
.notif { position: relative; margin-left: 8px; width: 36px; height: 22px; }
.notif b { position: absolute; left: 7px; top: 8px; width: 17px; height: 17px; border: 1px solid #8b8f93; border-radius: 50%; background: #2b3036; font: 600 12px/15px "Open Sans", sans-serif; text-align: center; }
.desktop-edge { width: 5px; height: 40px; border-left: 1px solid #6d7379; }
</style>
